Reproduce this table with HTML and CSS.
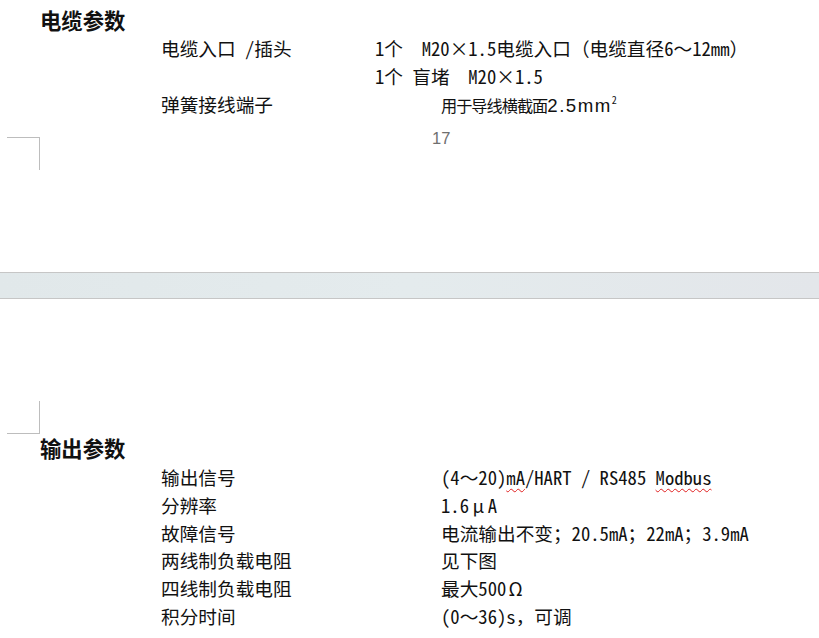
FILE: index.html
```html
<!DOCTYPE html>
<html lang="zh-CN">
	<head>
		<meta charset="utf-8">
		<title>技术参数</title>
		<link rel="stylesheet" href="styles.css">
	</head>
	<body>
		<div class="doc">
			<section class="page page-end">
				<h2 class="sec">电缆参数</h2>
				<div class="params params-cable">
					<span class="label">电缆入口 /插头</span>
					<span class="value">1个  M20<span class="x">×</span>1.5电缆入口（电缆直径6～12mm）</span>
					<span class="label"></span>
					<span class="value">1个 盲堵  M20<span class="x">×</span>1.5</span>
					<span class="label">弹簧接线端子</span>
					<span class="value indent"><span class="tight">用于导线横截面</span><span class="num">2.5mm</span><span class="sq">2</span></span>
				</div>
				<p class="pnum">17</p>
				<span class="mark mark-foot"></span>
			</section>

			<div class="gap"></div>

			<section class="page page-start">
				<span class="mark mark-head"></span>
				<h2 class="sec">输出参数</h2>
				<div class="params params-output">
					<span class="label">输出信号</span>
					<span class="value">(4～20)<span class="spell">mA</span>/HART / RS485 <span class="spell">Modbus</span></span>
					<span class="label">分辨率</span>
					<span class="value">1.6<span class="x">μ</span>A</span>
					<span class="label">故障信号</span>
					<span class="value">电流输出不变；20.5mA；22mA；3.9mA</span>
					<span class="label">两线制负载电阻</span>
					<span class="value">见下图</span>
					<span class="label">四线制负载电阻</span>
					<span class="value">最大500<span class="x">Ω</span></span>
					<span class="label">积分时间</span>
					<span class="value">(0～36)s，可调</span>
				</div>
			</section>
		</div>
	</body>
</html>
```

FILE: styles.css
```css
body {
	background: #fff;
	color: #111;
	font-family: "Noto Sans Mono CJK SC", "Noto Sans CJK SC", sans-serif;
	margin: 0;
	overflow: hidden;
}
.doc {
	width: 819px;
}
.page {
	background: #fff;
	position: relative;
}
.page-end {
	height: 272px;
	padding-top: 6px;
	box-sizing: border-box;
}
.page-start {
	height: 340px;
	padding-top: 134px;
	box-sizing: border-box;
}
.gap {
	background: linear-gradient(to right, #e1e8ea, #e4ebed 50%, #e3e6ea);
	border-bottom: 1px solid #c6c6c6;
	border-top: 1px solid #c6c6c6;
	height: 25px;
}
.sec {
	font-size: 21.33px;
	font-weight: bold;
	line-height: 28px;
	margin: 0 0 0 40px;
}
.page-start .sec {
	line-height: 30px;
}
.params {
	display: grid;
	font-size: 18.67px;
	line-height: 28px;
	margin-left: 161px;
	white-space: pre;
}
.params > span {
	height: 28px;
}
.params-cable {
	grid-template-columns: 214px auto;
}
.params-output {
	grid-template-columns: 280px auto;
	line-height: 27.8px;
}
.params-output > span {
	height: 27.8px;
}
.indent {
	padding-left: 66px;
}
.tight {
	font-size: 16.2px;
	letter-spacing: -1px;
	line-height: 1;
}
.num {
	font-family: "Liberation Sans", sans-serif;
	letter-spacing: 1.5px;
	line-height: 1;
}
.x {
	display: inline-block;
	text-align: center;
	width: 1em;
}
.sq {
	font-size: 10px;
	line-height: 1;
	vertical-align: 8px;
}
.spell {
	text-decoration: underline wavy #e02020;
	text-decoration-thickness: 1px;
	text-underline-offset: 3px;
}
.pnum {
	color: #6f6f6f;
	font-family: "Liberation Sans", sans-serif;
	font-size: 16.5px;
	line-height: 40px;
	margin: 0 0 0 432px;
}
.mark {
	border-color: #bdbdbd;
	border-style: solid;
	border-width: 0;
	height: 32px;
	left: 7px;
	position: absolute;
	width: 32px;
}
.mark-foot {
	border-right-width: 1px;
	border-top-width: 1px;
	top: 137px;
}
.mark-head {
	border-bottom-width: 1px;
	border-right-width: 1px;
	top: 102px;
}
```
